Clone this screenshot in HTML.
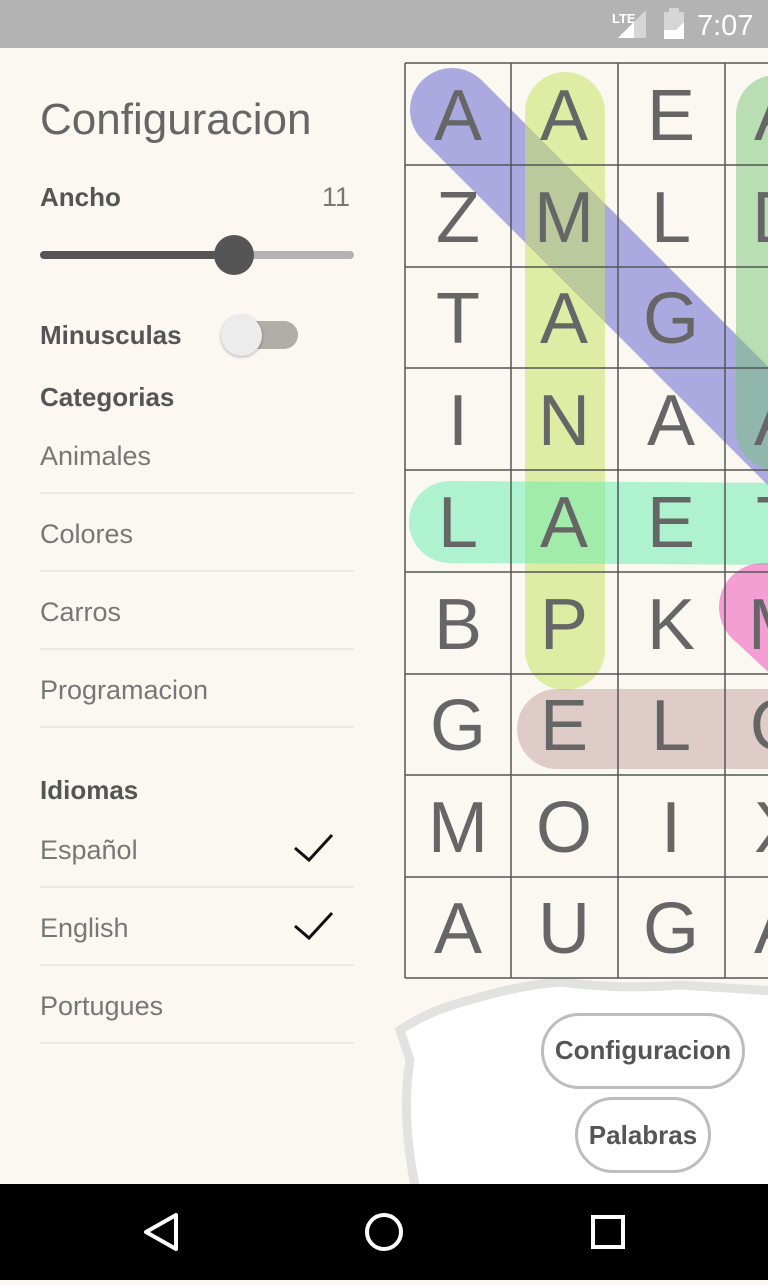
<!DOCTYPE html>
<html><head><meta charset="utf-8"><style>
*{margin:0;padding:0;box-sizing:border-box}
body{width:768px;height:1280px;overflow:hidden;background:#faf8f1;font-family:"Liberation Sans",Roboto,sans-serif;position:relative}
.sb{position:absolute;left:0;top:0;width:768px;height:48px;background:#b3b3b3}
.nav{position:absolute;left:0;top:1184px;width:768px;height:96px;background:#000}
.t{position:absolute;color:#666}
.b{font-weight:bold;color:#555;font-size:26px}
.item{position:absolute;left:40px;width:314px;height:78px;border-bottom:2px solid #ece9e2;font-size:27px;color:#777;padding-top:25px}
.btn{position:absolute;border:3px solid #bdbdbd;border-radius:40px;background:#fff;font-weight:bold;color:#555;font-size:26px;text-align:center}
</style></head><body>
<div class="sb">
<svg width="768" height="48" style="position:absolute;left:0;top:0">
<text x="612" y="23" font-size="13" font-weight="bold" fill="#fff" font-family="Liberation Sans">LTE</text>
<polygon points="618,38 646,10 646,38" fill="#d6d6d6"/>
<polygon points="618,38 634,22 634,38" fill="#fff"/>
<rect x="664" y="12" width="20" height="27" fill="#d6d6d6"/><rect x="669" y="8" width="10" height="5" fill="#d6d6d6"/>
<polygon points="664,39 684,39 684,22 676,30 664,30" fill="#fff"/>
<text x="697" y="35" font-size="29" fill="#fff" font-family="Liberation Sans">7:07</text>
</svg></div>

<div class="t" style="left:40px;top:95px;font-size:44px;color:#666">Configuracion</div>
<div class="t b" style="left:40px;top:182px">Ancho</div>
<div class="t" style="left:322px;top:182px;font-size:27px;color:#777">11</div>
<div style="position:absolute;left:40px;top:251px;width:195px;height:8px;border-radius:4px;background:#555"></div>
<div style="position:absolute;left:235px;top:251px;width:119px;height:8px;border-radius:4px;background:#b3b3b3"></div>
<div style="position:absolute;left:214px;top:235px;width:40px;height:40px;border-radius:50%;background:#555"></div>
<div class="t b" style="left:40px;top:320px">Minusculas</div>
<div style="position:absolute;left:223px;top:321px;width:75px;height:28px;border-radius:14px;background:#b0aea9"></div>
<div style="position:absolute;left:221px;top:315px;width:41px;height:41px;border-radius:50%;background:#ececec;box-shadow:0 1px 3px rgba(0,0,0,.3)"></div>
<div class="t b" style="left:40px;top:382px">Categorias</div>
<div class="item" style="top:416px">Animales</div>
<div class="item" style="top:494px">Colores</div>
<div class="item" style="top:572px">Carros</div>
<div class="item" style="top:650px">Programacion</div>
<div class="t b" style="left:40px;top:775px">Idiomas</div>
<div class="item" style="top:810px">Español</div>
<div class="item" style="top:888px">English</div>
<div class="item" style="top:966px">Portugues</div>
<svg width="768" height="1184" style="position:absolute;left:0;top:0">
<path d="M295,848 L309,860 L332,835" stroke="#111" stroke-width="3" fill="none"/>
<path d="M295,926 L309,938 L332,913" stroke="#111" stroke-width="3" fill="none"/>
<path d="M400,1030 Q430,1010 470,1000 Q520,985 560,982 Q620,990 680,985 L790,992 L790,1200 L418,1200 Q400,1120 410,1060 Z" fill="#fff" stroke="#e2e2e0" stroke-width="9"/>
<g stroke-linecap="round" fill="none">
<line x1="452" y1="110" x2="800" y2="458" stroke="rgba(105,105,210,0.55)" stroke-width="84"/>
<line x1="565" y1="112" x2="565" y2="650" stroke="rgba(200,225,100,0.55)" stroke-width="80"/>
<line x1="776" y1="115" x2="776" y2="430" stroke="rgba(120,195,120,0.5)" stroke-width="80"/>
<line x1="450" y1="522" x2="820" y2="524" stroke="rgba(100,235,175,0.5)" stroke-width="82"/>
<line x1="763" y1="607" x2="820" y2="660" stroke="rgba(240,110,195,0.65)" stroke-width="88"/>
<line x1="557" y1="729" x2="820" y2="729" stroke="rgba(190,150,150,0.45)" stroke-width="80"/>
</g>
<g stroke="#555" stroke-width="1.5">
<line x1="405" y1="63" x2="405" y2="978"/><line x1="511" y1="63" x2="511" y2="978"/><line x1="618" y1="63" x2="618" y2="978"/><line x1="725" y1="63" x2="725" y2="978"/>
<line x1="405" y1="63" x2="768" y2="63"/><line x1="405" y1="165" x2="768" y2="165"/><line x1="405" y1="267" x2="768" y2="267"/><line x1="405" y1="368" x2="768" y2="368"/><line x1="405" y1="470" x2="768" y2="470"/><line x1="405" y1="572" x2="768" y2="572"/><line x1="405" y1="674" x2="768" y2="674"/><line x1="405" y1="775" x2="768" y2="775"/><line x1="405" y1="877" x2="768" y2="877"/><line x1="405" y1="978" x2="768" y2="978"/>
</g>
<g font-family="Liberation Sans" font-size="72" fill="#666" text-anchor="middle">
<text x="458" y="140">A</text><text x="564" y="140">A</text><text x="671" y="140">E</text><text x="778" y="140">A</text>
<text x="458" y="242">Z</text><text x="564" y="242">M</text><text x="671" y="242">L</text><text x="778" y="242">D</text>
<text x="458" y="343">T</text><text x="564" y="343">A</text><text x="671" y="343">G</text><text x="778" y="343">I</text>
<text x="458" y="445">I</text><text x="564" y="445">N</text><text x="671" y="445">A</text><text x="778" y="445">A</text>
<text x="458" y="547">L</text><text x="564" y="547">A</text><text x="671" y="547">E</text><text x="778" y="547">T</text>
<text x="458" y="649">B</text><text x="564" y="649">P</text><text x="671" y="649">K</text><text x="778" y="649">M</text>
<text x="458" y="750">G</text><text x="564" y="750">E</text><text x="671" y="750">L</text><text x="778" y="750">O</text>
<text x="458" y="852">M</text><text x="564" y="852">O</text><text x="671" y="852">I</text><text x="778" y="852">X</text>
<text x="458" y="953">A</text><text x="564" y="953">U</text><text x="671" y="953">G</text><text x="778" y="953">A</text>
</g>
</svg>
<div class="btn" style="left:541px;top:1013px;width:204px;height:76px;line-height:68px">Configuracion</div>
<div class="btn" style="left:575px;top:1097px;width:136px;height:76px;line-height:70px">Palabras</div>
<div class="nav"><svg width="768" height="96">
<polygon points="146,48 176,31 176,65" fill="none" stroke="#fff" stroke-width="4" stroke-linejoin="round"/>
<circle cx="384" cy="48" r="17" fill="none" stroke="#fff" stroke-width="4"/>
<rect x="593" y="33" width="30" height="30" fill="none" stroke="#fff" stroke-width="4"/>
</svg></div>
</body></html>
